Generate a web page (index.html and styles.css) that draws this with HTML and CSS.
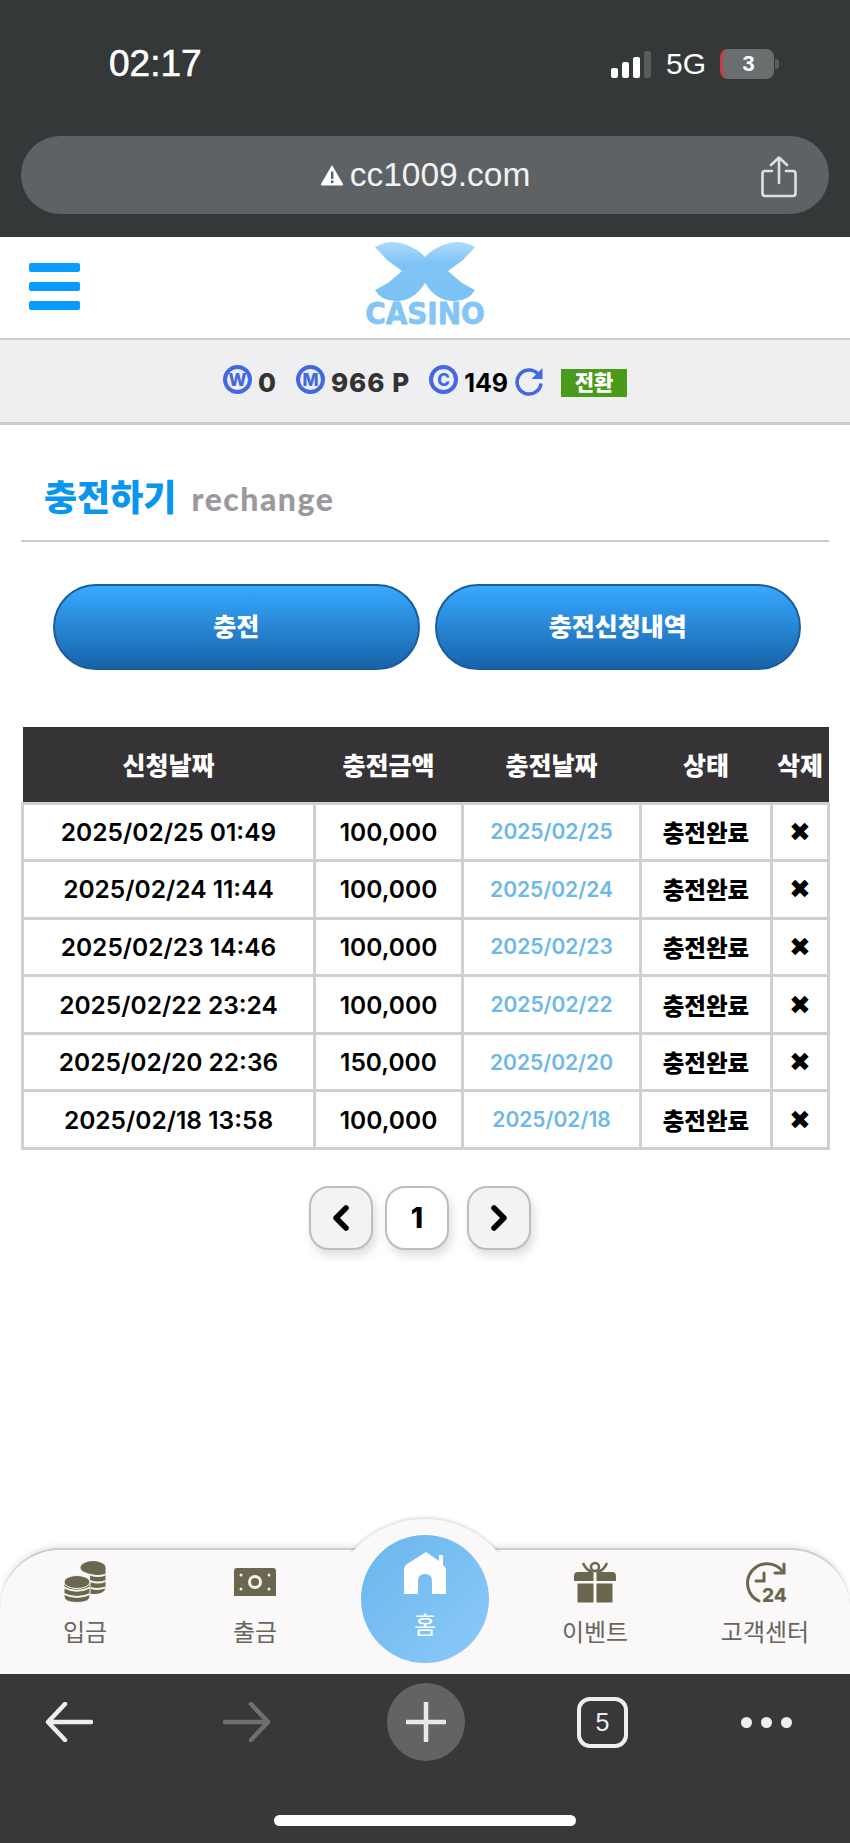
FILE: index.html
```html
<!DOCTYPE html>
<html lang="ko">
  <head>
    <meta charset="UTF-8">
    <meta name="viewport" content="width=device-width, initial-scale=1.0">
    <title>충전하기</title>
    <link rel="stylesheet" href="styles.css">
  </head>
  <body>
    <!-- phone status bar + address bar -->
    <div class="topbar">
      <div class="status">
        <span class="clock">02:17</span>
        <div class="status-right">
          <div class="signal"><i class="s1"></i><i class="s2"></i><i class="s3"></i><i class="s4"></i></div>
          <span class="net">5G</span>
          <div class="battery"><span class="battery-body">3</span><i class="battery-nub"></i></div>
        </div>
      </div>
      <div class="urlbar">
        <div class="url">
          <svg class="warn" viewBox="0 0 24 22" width="24" height="22"><path d="M12 1 L23 20 Q23.500 21.500 22 21.500 H2 Q0.500 21.500 1 20 Z" fill="#fff"/><rect x="11" y="7.500" width="2.400" height="7.500" fill="#5f6264"/><circle cx="12.200" cy="17.800" r="1.500" fill="#5f6264"/></svg>
          <span>cc1009.com</span>
        </div>
        <svg class="share" viewBox="0 0 36 42" width="36" height="42" fill="none" stroke="#dfe0e0" stroke-width="2.600" stroke-linecap="round" stroke-linejoin="round"><path d="M11 15 H4 Q1.500 15 1.500 17.500 V37 Q1.500 40 4 40 H32 Q34.500 40 34.500 37 V17.500 Q34.500 15 32 15 H25"/><path d="M18 27 V2 M10 9 L18 1.500 L26 9"/></svg>
      </div>
    </div>

    <header class="site-head">
      <div class="burger"><i></i><i></i><i></i></div>
      <div class="logo">
        <svg viewBox="0 0 120 60" width="120" height="60">
          <defs>
            <linearGradient id="logoFill" x1="0" y1="0" x2="0" y2="1">
              <stop offset="0" stop-color="#aedbfa"/>
              <stop offset="0.350" stop-color="#80c4f6"/>
              <stop offset="1" stop-color="#7cc2f5"/>
            </linearGradient>
          </defs>
          <path d="M10 6 Q26 -3 42 4 Q54 9 60 16 Q66 9 78 4 Q94 -3 110 6 L98 19 L83 30 L97 42 L110 49 Q104 60 89 60 Q71 60 60 42 Q49 60 31 60 Q16 60 10 49 L23 42 L37 30 L22 19 Z" fill="url(#logoFill)"/>
        </svg>
        <span class="logo-text">CASINO</span>
      </div>
    </header>

    <div class="balance">
      <span class="coin">W</span><b class="num first">0</b>
      <span class="coin">M</span><b class="num">966 P</b>
      <span class="coin">C</span><b class="num black">149</b>
      <svg class="refresh" viewBox="0 0 30 30" width="30" height="30" fill="none" stroke="#4169e1" stroke-width="3.500"><path d="M24 8 A12 12 0 1 0 27 17.500"/><path d="M28.500 2 V13 H17.500 Z" stroke="none" fill="#4169e1"/></svg>
      <span class="swap">전환</span>
    </div>

    <main class="content">
      <div class="title-row">
        <h1>충전하기</h1>
        <span class="title-en">rechange</span>
      </div>

      <div class="tabs">
        <a class="tab-btn">충전</a>
        <a class="tab-btn">충전신청내역</a>
      </div>

      <table class="list">
        <colgroup>
          <col class="c1"><col class="c2"><col class="c3"><col class="c4"><col class="c5">
        </colgroup>
        <thead>
          <tr><th>신청날짜</th><th>충전금액</th><th>충전날짜</th><th>상태</th><th>삭제</th></tr>
        </thead>
        <tbody>
          <tr><td>2025/02/25 01:49</td><td>100,000</td><td class="done-date">2025/02/25</td><td>충전완료</td><td class="del">✖</td></tr>
          <tr><td>2025/02/24 11:44</td><td>100,000</td><td class="done-date">2025/02/24</td><td>충전완료</td><td class="del">✖</td></tr>
          <tr><td>2025/02/23 14:46</td><td>100,000</td><td class="done-date">2025/02/23</td><td>충전완료</td><td class="del">✖</td></tr>
          <tr><td>2025/02/22 23:24</td><td>100,000</td><td class="done-date">2025/02/22</td><td>충전완료</td><td class="del">✖</td></tr>
          <tr><td>2025/02/20 22:36</td><td>150,000</td><td class="done-date">2025/02/20</td><td>충전완료</td><td class="del">✖</td></tr>
          <tr><td>2025/02/18 13:58</td><td>100,000</td><td class="done-date">2025/02/18</td><td>충전완료</td><td class="del">✖</td></tr>
        </tbody>
      </table>

      <div class="pager">
        <a class="page-btn"><svg viewBox="0 0 20 28" width="20" height="28" fill="none" stroke="#000" stroke-width="5.500" stroke-linecap="round" stroke-linejoin="round"><path d="M15 4 L5 14 L15 24"/></svg></a>
        <a class="page-btn current">1</a>
        <a class="page-btn"><svg viewBox="0 0 20 28" width="20" height="28" fill="none" stroke="#000" stroke-width="5.500" stroke-linecap="round" stroke-linejoin="round"><path d="M5 4 L15 14 L5 24"/></svg></a>
      </div>
    </main>

    <!-- site bottom menu -->
    <nav class="bottom-nav">
      <div class="bump"></div>
      <a class="nav-item">
        <svg viewBox="0 0 42 42" width="42" height="42" fill="#6b664e">
          <path d="M26 7 H41.500 V26 Q41.500 32 32 33 L26 33 Z"/>
          <path d="M26 12.500 Q34 15.500 41.500 12.500 V14.500 Q34 17.500 26 14.500 Z M26 19 Q34 22 41.500 19 V21 Q34 24 26 21 Z M27 26 Q34 28 41.500 25.500 V27.500 Q34 30 27 28 Z" fill="#f6f3ea"/>
          <ellipse cx="29" cy="6.500" rx="12.500" ry="6.500"/>
          <path d="M0 21 H26 V35 Q26 41.500 13 41.500 Q0 41.500 0 35 Z" stroke="#faf8f8" stroke-width="1"/>
          <path d="M0 25.500 Q13 32 26 25.500 V27.500 Q13 34 0 27.500 Z M0 32 Q13 38 26 32 V34 Q13 40 0 34 Z" fill="#f6f3ea"/>
          <ellipse cx="13" cy="21" rx="13" ry="6.500" stroke="#faf8f8" stroke-width="1"/>
        </svg>
        <span>입금</span>
      </a>
      <a class="nav-item">
        <svg viewBox="0 0 42 42" width="42" height="42">
          <path d="M3 7 H39 Q42 7 42 10 V35 H0 V10 Q0 7 3 7 Z" fill="#6b664e"/>
          <circle cx="21" cy="21" r="5.500" fill="none" stroke="#f6f3ea" stroke-width="3"/>
          <circle cx="7" cy="14" r="1.500" fill="#f6f3ea"/><circle cx="35" cy="14" r="1.500" fill="#f6f3ea"/>
          <circle cx="7" cy="28" r="1.500" fill="#f6f3ea"/><circle cx="35" cy="28" r="1.500" fill="#f6f3ea"/>
        </svg>
        <span>출금</span>
      </a>
      <a class="nav-item home">
        <svg viewBox="0 0 42 42" width="42" height="42" fill="#fff">
          <path d="M22 0 L35 9 V3 H39 V13 L42 16 V42 H28 V29 Q28 22 21 22 Q14 22 14 29 V42 H0 V17 Q0 14 3 12 Z"/>
        </svg>
        <span>홈</span>
      </a>
      <a class="nav-item">
        <svg viewBox="0 0 42 42" width="42" height="42" fill="#6b664e">
          <circle cx="21" cy="6" r="4" fill="none" stroke="#6b664e" stroke-width="2.500"/>
          <path d="M18 11 Q12 9 9 2 M24 11 Q30 9 33 2" fill="none" stroke="#6b664e" stroke-width="2.500"/>
          <path d="M4 11 H19.500 V20 H0 V15 Q0 11 4 11 Z M22.500 11 H38 Q42 11 42 15 V20 H22.500 Z"/>
          <path d="M3.500 22.500 H19.500 V41.500 H3.500 Z M22.500 22.500 H38.500 V41.500 H22.500 Z"/>
        </svg>
        <span>이벤트</span>
      </a>
      <a class="nav-item">
        <svg class="icon-clock" viewBox="0 0 50 50" width="50" height="50" fill="none" stroke="#6b664e" stroke-width="3" stroke-linecap="round">
          <path d="M40 11 A19.500 19.500 0 1 0 16 40"/>
          <path d="M41 3 V12 H32"/>
          <path d="M21 12 V20 H13"/>
          <text x="19" y="41" class="icon-24">24</text>
        </svg>
        <span>고객센터</span>
      </a>
    </nav>

    <!-- browser toolbar -->
    <div class="toolbar">
      <svg class="tb-back" viewBox="0 0 48 40" width="48" height="40" fill="none" stroke="#eee" stroke-width="4.500" stroke-linecap="round" stroke-linejoin="round"><path d="M46 20 H3 M20 2 L3 20 L20 38"/></svg>
      <svg class="tb-forward" viewBox="0 0 48 40" width="48" height="40" fill="none" stroke="#6f6f70" stroke-width="4.500" stroke-linecap="round" stroke-linejoin="round"><path d="M2 20 H45 M28 2 L45 20 L28 38"/></svg>
      <div class="tb-plus"><svg viewBox="0 0 40 40" width="40" height="40" fill="none" stroke="#e8e8e8" stroke-width="4.500" stroke-linecap="round"><path d="M20 1 V39 M1 20 H39"/></svg></div>
      <div class="tb-tabs">5</div>
      <div class="tb-more"><i></i><i></i><i></i></div>
      <div class="home-bar"></div>
    </div>
  </body>
</html>
```

FILE: styles.css
```css
* {
    box-sizing: border-box;
}
html, body {
    margin: 0;
    padding: 0;
}
body {
    width: 850px;
    height: 1843px;
    display: flex;
    flex-direction: column;
    overflow: hidden;
    background: #fff;
    color: #000;
    font-family: Inter, "Noto Sans CJK KR", sans-serif;
}

/* top of the phone */
.topbar {
    height: 237px;
    flex: none;
    padding: 49px 21px 0;
    background: #353838;
    color: #fff;
    font-family: "Liberation Sans", sans-serif;
}
.status {
    display: flex;
    justify-content: space-between;
    align-items: center;
    height: 30px;
    padding: 0 50px 0 88px;
}
.clock {
    font-size: 37px;
    font-weight: 500;
    -webkit-text-stroke: 0.6px #fff;
}
.status-right {
    display: flex;
    align-items: center;
}
.signal {
    display: flex;
    align-items: flex-end;
    gap: 4px;
    height: 27px;
    margin-right: 15px;
}
.signal i {
    width: 7px;
    border-radius: 2px;
    background: #fff;
}
.s1 { height: 10px; }
.s2 { height: 16px; }
.s3 { height: 21px; }
.s4 { height: 27px; background: #5a5d5d !important; }
.net {
    font-size: 30px;
    margin-right: 14px;
}
.battery {
    display: flex;
    align-items: center;
}
.battery-body {
    width: 54px;
    height: 30px;
    border-radius: 8px;
    border-left: 3px solid #c33d42;
    background: #6b6e6e;
    text-align: center;
    line-height: 30px;
    font-size: 22px;
    font-weight: bold;
}
.battery-nub {
    width: 4px;
    height: 10px;
    margin-left: 1px;
    border-radius: 0 3px 3px 0;
    background: #5a5d5d;
}
.urlbar {
    position: relative;
    display: flex;
    justify-content: center;
    align-items: center;
    height: 78px;
    margin-top: 57px;
    border-radius: 39px;
    background: #5f6264;
}
.url {
    display: flex;
    align-items: center;
    gap: 6px;
    margin-left: 0;
    font-size: 33.500px;
    color: #f2f2f2;
}
.share {
    position: absolute;
    right: 32px;
    top: 20px;
}

/* site header */
.site-head {
    position: relative;
    display: flex;
    justify-content: center;
    height: 103px;
    flex: none;
    border-bottom: 2px solid #ccc;
    background: #fff;
}
.burger {
    position: absolute;
    left: 29px;
    top: 26px;
    display: flex;
    flex-direction: column;
    gap: 10px;
}
.burger i {
    display: block;
    width: 51px;
    height: 9px;
    border-radius: 2px;
    background: #0a9bff;
}
.logo {
    display: flex;
    flex-direction: column;
    align-items: center;
    width: 120px;
    margin-top: 4px;
}
.logo svg {
    display: block;
}
.logo-text {
    margin-top: -2px;
    font-family: "DejaVu Sans", sans-serif;
    font-stretch: condensed;
    font-size: 31px;
    font-weight: bold;
    line-height: 28px;
    color: #83c5f4;
    -webkit-text-stroke: 0.8px #83c5f4;
}

/* money row */
.balance {
    display: flex;
    justify-content: center;
    align-items: center;
    height: 85px;
    flex: none;
    padding-top: 3px;
    border-bottom: 3px solid #ccc;
    background: #efeef1;
}
.coin {
    display: flex;
    justify-content: center;
    align-items: center;
    width: 29px;
    height: 29px;
    margin-top: -6px;
    border: 4px solid #4169e1;
    border-radius: 50%;
    color: #4169e1;
    font-size: 17px;
    font-weight: 800;
}
.num {
    margin: 0 19px 0 6px;
    font-size: 26px;
    font-weight: 800;
    letter-spacing: 1px;
    color: #333;
}
.num.black {
    margin-right: 6px;
    font-size: 25px;
    letter-spacing: 0;
    color: #000;
    font-weight: 700;
}
.refresh {
    margin: -3px 17px 0 0;
}
.swap {
    width: 66px;
    height: 28px;
    background: #4a9a1c;
    color: #fff;
    text-align: center;
    font-size: 21px;
    font-weight: 900;
    line-height: 27px;
}

/* page body */
.content {
    flex: 1;
}
.title-row {
    display: flex;
    align-items: baseline;
    gap: 15px;
    height: 117px;
    margin: 0 21px;
    padding: 46px 0 0 23px;
    border-bottom: 2px solid #ccc;
}
.title-row h1 {
    margin: 0;
    font-size: 36px;
    line-height: 54px;
    font-weight: 900;
    color: #0a96ee;
}
.title-en {
    font-family: Lato, sans-serif;
    font-size: 32px;
    font-weight: 900;
    letter-spacing: 1.500px;
    color: #9a999e;
}
.tabs {
    display: flex;
    gap: 15px;
    margin: 42px 49px 0 53px;
}
.tab-btn {
    flex: 1;
    height: 86px;
    border: 2px solid #1b5d9c;
    border-radius: 43px;
    background: linear-gradient(#38a9ff, #1763a8);
    color: #fff;
    text-align: center;
    font-size: 25px;
    font-weight: 900;
    line-height: 82px;
}
.list {
    width: 806px;
    margin: 57px 0 0 21px;
    border-collapse: collapse;
    table-layout: fixed;
}
.c1 { width: 292px; }
.c2 { width: 148px; }
.c3 { width: 178px; }
.c4 { width: 131px; }
.c5 { width: 57px; }
.list th {
    height: 76px;
    padding: 0;
    background: #353335;
    color: #fff;
    font-size: 25px;
    font-weight: 900;
    white-space: nowrap;
}
.list td {
    height: 57.600px;
    padding: 0;
    border: 3px solid #d0d0d4;
    text-align: center;
    font-size: 24.500px;
    font-weight: 600;
}
.list td:nth-child(4) {
    font-size: 23.500px;
    font-weight: 900;
}
.list td.done-date {
    font-size: 21px;
    color: #6cb8ea;
}
.list td.del {
    font-family: "DejaVu Sans", sans-serif;
    font-size: 26px;
}
.pager {
    display: flex;
    justify-content: center;
    gap: 12px;
    margin-top: 36px;
    padding-right: 10px;
}
.page-btn {
    display: flex;
    justify-content: center;
    align-items: center;
    width: 64px;
    height: 64px;
    border: 2px solid #bdbdbd;
    border-radius: 20px;
    background: #f3f2f4;
    box-shadow: 3px 6px 10px rgba(0, 0, 0, 0.13);
    font-size: 28px;
    font-weight: 800;
}
.page-btn.current {
    margin-right: 6px;
    background: #fff;
}

/* bottom menu */
.bottom-nav {
    position: relative;
    display: grid;
    grid-template-columns: repeat(5, 170px);
    height: 126px;
    flex: none;
    border-top: 2px solid #ccc;
    border-radius: 60px 60px 0 0;
    background: #faf8f8;
    box-shadow: 0 -3px 5px rgba(0, 0, 0, 0.08);
    font-family: "Noto Sans CJK KR", sans-serif;
}
.bump {
    position: absolute;
    left: 328px;
    top: -31px;
    width: 194px;
    height: 97px;
    border-radius: 97px 97px 0 0;
    background: #faf8f8;
    box-shadow: 0 -2px 3px rgba(0, 0, 0, 0.12);
    clip-path: inset(-6px -6px 64px -6px);
}
.nav-item {
    position: relative;
    display: flex;
    flex-direction: column;
    align-items: center;
    padding-top: 11px;
    color: #66665c;
    font-size: 24px;
    line-height: 34px;
}
.nav-item span {
    margin-top: 11px;
    white-space: nowrap;
}
.nav-item.home {
    justify-self: center;
    width: 128px;
    height: 128px;
    margin-top: -15px;
    padding-top: 17px;
    border-radius: 50%;
    background: linear-gradient(135deg, #69b6ee, #8ccaf8);
    color: #fff;
}
.nav-item.home span {
    margin-top: 13px;
}
.icon-clock {
    margin: 0 -6px -8px 0;
}
.icon-24 {
    font-family: Inter, sans-serif;
    font-size: 19px;
    font-weight: 800;
    fill: #6b664e;
    stroke: none;
}

/* browser toolbar */
.toolbar {
    position: relative;
    display: flex;
    align-items: center;
    gap: 113px;
    height: 169px;
    flex: none;
    padding: 8px 0 81px 45px;
    background: #38383a;
}
.tb-forward {
    margin-left: 17px;
}
.tb-plus {
    display: flex;
    justify-content: center;
    align-items: center;
    width: 78px;
    height: 78px;
    margin-left: 3px;
    border-radius: 50%;
    background: #636365;
}
.tb-tabs {
    width: 51px;
    height: 51px;
    margin-left: -1px;
    border: 4px solid #eee;
    border-radius: 13px;
    color: #eee;
    text-align: center;
    font-family: "Liberation Sans", sans-serif;
    font-size: 25px;
    line-height: 43px;
}
.tb-more {
    display: flex;
    gap: 9px;
}
.tb-more i {
    width: 11px;
    height: 11px;
    border-radius: 50%;
    background: #eee;
}
.home-bar {
    position: absolute;
    left: 274px;
    top: 141px;
    width: 302px;
    height: 11px;
    border-radius: 6px;
    background: #fff;
}
```
